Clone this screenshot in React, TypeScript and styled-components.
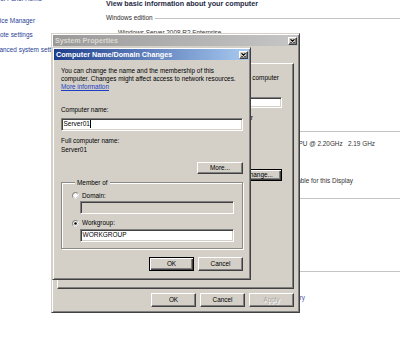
import React from "react"
import styled, { createGlobalStyle } from "styled-components"

const FONT = `"Liberation Sans", Arial, sans-serif`

const GlobalStyle = createGlobalStyle`
  html, body {
    margin: 0;
    padding: 0;
    background: #fff;
  }
  body {
    font-family: ${FONT};
  }
`

const Screen = styled.div`
  position: relative;
  width: 400px;
  height: 358px;
  overflow: hidden;
  background: #fff;
  font-family: ${FONT};
`

// ---- the control panel "System" page underneath ----

const Page = styled.div`
  display: grid;
  grid-template-columns: 106px 1fr;
  height: 100%;
`

const Tasks = styled.ul`
  list-style: none;
  margin: 0 0 0 -11.5px;
  padding: 0;
  display: flex;
  flex-direction: column;
`

const Task = styled.li<{ $gap: number; $indent?: number }>`
  margin-top: ${(p) => p.$gap}px;
  text-indent: ${(p) => p.$indent ?? 0}px;
  font-size: 6.4px;
  line-height: 8px;
  color: #1f3f98;
  white-space: nowrap;
`

const Main = styled.main`
  display: flex;
  flex-direction: column;
  min-width: 0;
`

const Heading = styled.h1`
  margin: -1px 0 0;
  font-size: 7.2px;
  line-height: 9px;
  font-weight: bold;
  color: #1e2a44;
  white-space: nowrap;
`

const Section = styled.h2<{ $gap: number }>`
  display: flex;
  align-items: center;
  gap: 2px;
  margin: ${(p) => p.$gap}px 0 0;
  font-size: 6.4px;
  line-height: 8px;
  font-weight: normal;
  color: #2b2b2b;
  white-space: nowrap;

  &::after {
    content: "";
    flex: 1;
    border-top: 1px solid #c4c4c4;
  }
`

const Info = styled.p<{ $gap: number; $right?: number; $indent?: number; $link?: boolean }>`
  margin: ${(p) => p.$gap}px 0 0;
  padding: 0 ${(p) => p.$right ?? 0}px 0 ${(p) => p.$indent ?? 0}px;
  text-align: ${(p) => (p.$right ? "right" : "left")};
  font-size: 6.4px;
  line-height: 8px;
  color: ${(p) => (p.$link ? "#4a57a6" : "#333")};
  white-space: pre;
`

// ---- classic windows ----

const Window = styled.section<{ $x: number; $y: number; $w: number; $h: number }>`
  position: absolute;
  left: ${(p) => p.$x}px;
  top: ${(p) => p.$y}px;
  width: ${(p) => p.$w}px;
  height: ${(p) => p.$h}px;
  box-sizing: border-box;
  display: flex;
  flex-direction: column;
  padding: 1px;
  background: #d4d0c8;
  border: 1px solid;
  border-color: #d4d0c8 #404040 #404040 #d4d0c8;
  box-shadow: inset 1px 1px 0 #fff, inset -1px -1px 0 #808080;
  font-size: 6.4px;
  line-height: 8px;
  color: #000;
`

const TitleBar = styled.header<{ $active?: boolean }>`
  flex: none;
  display: flex;
  align-items: center;
  justify-content: space-between;
  height: 11px;
  padding: 0 1px 0 2px;
  background: ${(p) =>
    p.$active
      ? "linear-gradient(90deg, #1d3d8c, #a8caf0)"
      : "linear-gradient(90deg, #9a9a9a, #c6c6c6)"};
  color: ${(p) => (p.$active ? "#fff" : "#dcd9d2")};
  font-size: 7.2px;
  line-height: 11px;
  font-weight: bold;
  white-space: nowrap;
`

const CloseBox = styled.span`
  display: flex;
  align-items: center;
  justify-content: center;
  width: 9px;
  height: 8px;
  box-sizing: border-box;
  background: #d4d0c8;
  border: 1px solid;
  border-color: #fff #404040 #404040 #fff;
  box-shadow: inset -1px -1px 0 #808080;
`

const CloseButton = () => (
  <CloseBox>
    <svg width="5" height="4" viewBox="0 0 5 4">
      <path d="M0.5 0.3 L4.5 3.7 M4.5 0.3 L0.5 3.7" stroke="#000" strokeWidth="1.1" fill="none" />
    </svg>
  </CloseBox>
)

const Button = styled.button<{ $w?: number; $h?: number; $default?: boolean }>`
  flex: none;
  width: ${(p) => p.$w ?? 45}px;
  height: ${(p) => p.$h ?? 14}px;
  box-sizing: border-box;
  margin: 0;
  padding: 0;
  font-family: ${FONT};
  font-size: 6.4px;
  line-height: 8px;
  color: #000;
  background: #d4d0c8;
  border: 1px solid;
  border-color: ${(p) => (p.$default ? "#000" : "#fff #404040 #404040 #fff")};
  box-shadow: ${(p) =>
    p.$default
      ? "inset 1px 1px 0 #fff, inset -1px -1px 0 #404040, inset -2px -2px 0 #808080"
      : "inset -1px -1px 0 #808080"};

  &:disabled {
    color: #a8a6a0;
    text-shadow: 1px 1px 0 #fff;
  }
`

const ButtonRow = styled.div`
  display: flex;
  justify-content: flex-end;
  gap: 4px;
  margin-top: auto;
`

const Field = styled.div<{ $gap?: number; $h?: number; $indent?: number; $disabled?: boolean; $grow?: boolean }>`
  box-sizing: border-box;
  display: flex;
  align-items: center;
  flex: ${(p) => (p.$grow ? 1 : "none")};
  height: ${(p) => p.$h ?? 13}px;
  margin: ${(p) => p.$gap ?? 0}px 0 0 ${(p) => p.$indent ?? 0}px;
  padding: 0 1.5px;
  background: ${(p) => (p.$disabled ? "#d4d0c8" : "#fff")};
  border: 1px solid;
  border-color: #808080 #fff #fff #808080;
  box-shadow: inset 1px 1px 0 #404040, inset -1px -1px 0 #d4d0c8;
  font-size: 6.5px;
  white-space: nowrap;
`

const Caret = styled.span`
  width: 1px;
  height: 8px;
  margin-left: 0.5px;
  background: #000;
`

// ---- System Properties ----

const SysBody = styled.div`
  flex: 1;
  display: flex;
  flex-direction: column;
  padding: 0 4px 4px;
`

const TabStrip = styled.div`
  display: flex;
  align-items: flex-end;
  height: 13px;
  margin-top: 4px;
  padding-left: 2px;
`

const Tab = styled.span<{ $active?: boolean }>`
  height: ${(p) => (p.$active ? 13 : 11)}px;
  box-sizing: border-box;
  padding: 0 3px;
  line-height: 11px;
  border: 1px solid;
  border-bottom: none;
  border-color: #fff #404040 transparent #fff;
  white-space: nowrap;
`

const TabPanel = styled.div`
  flex: 1;
  display: flex;
  flex-direction: column;
  margin-bottom: 4px;
  padding: 10px 11px 0 8px;
  border: 1px solid;
  border-color: #fff #404040 #404040 #fff;
  box-shadow: inset -1px -1px 0 #808080;
`

const PanelText = styled.div<{ $gap?: number; $right?: number; $wrap?: boolean }>`
  margin: ${(p) => p.$gap ?? 0}px ${(p) => p.$right ?? 0}px 0 0;
  text-align: ${(p) => (p.$right !== undefined ? "right" : "left")};
  white-space: ${(p) => (p.$wrap ? "normal" : "nowrap")};
  max-width: ${(p) => (p.$wrap ? "150px" : "none")};
`

const DescRow = styled.div`
  display: flex;
  align-items: center;
  gap: 6px;
  margin-top: 15px;
  white-space: nowrap;
`

const EndRow = styled.div<{ $gap: number }>`
  display: flex;
  justify-content: flex-end;
  margin-top: ${(p) => p.$gap}px;
`

// ---- Computer Name/Domain Changes ----

const DialogBody = styled.div`
  flex: 1;
  display: flex;
  flex-direction: column;
  padding: 6.5px 6px 7px 7px;
`

const Para = styled.p`
  margin: 0;
  line-height: 8.3px;
  white-space: nowrap;
`

const Link = styled.a`
  color: #1a3fc4;
  text-decoration: underline;
`

const Label = styled.div<{ $gap: number; $lh?: number }>`
  margin-top: ${(p) => p.$gap}px;
  line-height: ${(p) => p.$lh ?? 8}px;
  white-space: nowrap;
`

const MoreRow = styled.div`
  display: flex;
  justify-content: flex-end;
  margin-top: 7.5px;
`

const Group = styled.fieldset`
  display: flex;
  flex-direction: column;
  margin: 5px 0 0;
  padding: 4.5px 8px 6px 10px;
  border: 1px solid #8c8a84;
  box-shadow: inset 1px 1px 0 #fff, 1px 1px 0 #fff;
`

const Legend = styled.legend`
  position: relative;
  margin-left: 3px;
  padding: 0 2px;
  line-height: 8px;
  background: #d4d0c8;
`

const RadioRow = styled.label<{ $gap: number }>`
  display: flex;
  align-items: center;
  gap: 3px;
  height: 9px;
  margin-top: ${(p) => p.$gap}px;
  white-space: nowrap;
`

const Radio = ({ checked }: { checked?: boolean }) => (
  <svg width="7" height="7" viewBox="0 0 7 7">
    <circle cx="3.5" cy="3.5" r="3" fill="#fff" stroke="#6f6d68" strokeWidth="1" />
    <path d="M1.2 5.6 A3 3 0 0 0 5.8 1.2" stroke="#fff" strokeWidth="1" fill="none" />
    {checked && <circle cx="3.5" cy="3.5" r="1.3" fill="#000" />}
  </svg>
)

const App = () => {
  const tasks: Array<{ name: string; gap: number; indent?: number }> = [
    { name: "Control Panel Home", gap: -5, indent: -4 },
    { name: "Device Manager", gap: 13.5 },
    { name: "Remote settings", gap: 6.5, indent: -2 },
    { name: "Advanced system settings", gap: 7 },
  ]

  return (
    <Screen>
      <GlobalStyle />
      <Page>
        <Tasks>
          {tasks.map((t) => (
            <Task key={t.name} $gap={t.gap} $indent={t.indent}>
              {t.name}
            </Task>
          ))}
        </Tasks>
        <Main>
          <Heading>View basic information about your computer</Heading>
          <Section $gap={6}>Windows edition</Section>
          <Info $gap={7} $indent={12}>Windows Server 2008 R2 Enterprise</Info>
          <Section $gap={90}>System</Section>
          <Info $gap={5} $right={25}>
            {"Processor:      Intel(R) Core(TM)2 Duo CPU @ 2.20GHz   2.19 GHz"}
          </Info>
          <Info $gap={29} $right={47}>
            {"Pen and Touch:   No Pen or Touch Input is available for this Display"}
          </Info>
          <Section $gap={9}>Computer name, domain, and workgroup settings</Section>
          <Section $gap={65}>Windows activation</Section>
          <Info $gap={19} $right={95} $link>
            View activation summary
          </Info>
        </Main>
      </Page>

      <Window $x={51} $y={33} $w={249} $h={280}>
        <TitleBar>
          <span>System Properties</span>
          <CloseButton />
        </TitleBar>
        <SysBody>
          <TabStrip>
            <Tab $active>Computer Name</Tab>
            <Tab>Hardware</Tab>
            <Tab>Advanced</Tab>
            <Tab>Remote</Tab>
          </TabStrip>
          <TabPanel>
            <PanelText $right={3}>Windows uses the following information to identify your computer</PanelText>
            <DescRow>
              <span>Computer description:</span>
              <Field $h={11} $grow />
            </DescRow>
            <PanelText $gap={6} $right={29}>
              For example: IIS Production Server or Accounting Server
            </PanelText>
            <PanelText $gap={18} $wrap>
              To rename this computer or change its domain or workgroup, click Change.
            </PanelText>
            <EndRow $gap={13}>
              <Button $w={46} $h={12} $default>
                Change...
              </Button>
            </EndRow>
          </TabPanel>
          <ButtonRow>
            <Button>OK</Button>
            <Button>Cancel</Button>
            <Button disabled>Apply</Button>
          </ButtonRow>
        </SysBody>
      </Window>

      <Window $x={52} $y={47} $w={199} $h={233}>
        <TitleBar $active>
          <span>Computer Name/Domain Changes</span>
          <CloseButton />
        </TitleBar>
        <DialogBody>
          <Para>
            You can change the name and the membership of this
            <br />
            computer. Changes might affect access to network resources.
            <br />
            <Link>More information</Link>
          </Para>
          <Label $gap={15}>Computer name:</Label>
          <Field $gap={3.5}>
            Server01
            <Caret />
          </Field>
          <Label $gap={5.5} $lh={9}>
            Full computer name:
            <br />
            Server01
          </Label>
          <MoreRow>
            <Button $w={46} $h={12}>
              More...
            </Button>
          </MoreRow>
          <Group>
            <Legend>Member of</Legend>
            <RadioRow $gap={0}>
              <Radio />
              Domain:
            </RadioRow>
            <Field $gap={0.5} $indent={8} $disabled />
            <RadioRow $gap={5}>
              <Radio checked />
              Workgroup:
            </RadioRow>
            <Field $gap={1} $indent={8}>
              WORKGROUP
            </Field>
          </Group>
          <ButtonRow>
            <Button $default>OK</Button>
            <Button>Cancel</Button>
          </ButtonRow>
        </DialogBody>
      </Window>
    </Screen>
  )
}

export default App
